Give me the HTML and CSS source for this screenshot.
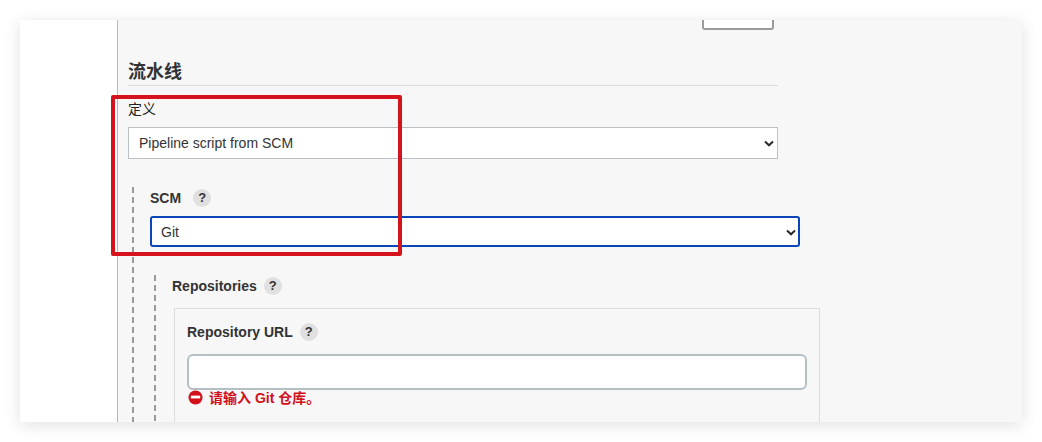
FILE: index.html
```html
<!DOCTYPE html>
<html lang="en">
<head>
    <meta charset="UTF-8" />
    <meta name="viewport" content="width=device-width, initial-scale=1.0" />
    <title>Pipeline</title>
    <link rel="stylesheet" href="styles.css">
</head>
<body>
    <div class="window">
        <aside class="sidebar"></aside>

        <main class="content">
            <div class="top-row"><div class="apply-btn"></div></div>

            <h2 class="section-title">流水线</h2>

            <div class="field-label first-label">定义</div>
            <div class="select-wrap definition">
                <select class="select">
                    <option>Pipeline script from SCM</option>
                </select>
                <svg class="chevron" viewBox="0 0 10 7"><path d="M1 1.5 5 5.3 9 1.5" /></svg>
            </div>

            <!-- SCM block -->
            <div class="nested scm-block">
                <div class="label-row">
                    <span class="label-bold">SCM</span>
                    <span class="help">?</span>
                </div>
                <div class="select-wrap scm-select">
                    <select class="select focused">
                        <option>Git</option>
                    </select>
                    <svg class="chevron" viewBox="0 0 10 7"><path d="M1 1.5 5 5.3 9 1.5" /></svg>
                </div>

                <!-- Repositories block -->
                <div class="nested repos-block">
                    <div class="label-row">
                        <span class="label-bold">Repositories</span>
                        <span class="help">?</span>
                    </div>
                    <div class="repo-card">
                        <div class="label-row">
                            <span class="label-bold">Repository URL</span>
                            <span class="help">?</span>
                        </div>
                        <input class="text-input" type="text">
                        <div class="error-msg">
                            <svg class="error-icon" viewBox="0 0 16 16">
                                <circle cx="8" cy="8" r="7.5" />
                                <rect x="3" y="6" width="10" height="3" />
                            </svg>
                            <span>请输入 Git 仓库。</span>
                        </div>
                    </div>
                </div>
            </div>
        </main>

        <!-- red annotation drawn over the form -->
        <div class="highlight"></div>
    </div>
</body>
</html>
```

FILE: styles.css
```css
/* Basic reset */
* {
    margin: 0;
    padding: 0;
    box-sizing: border-box;
}

body {
    width: 1042px;
    height: 442px;
    padding: 20px;
    overflow: hidden;
    background-color: #fff;
    color: #333;
    font-family: "Liberation Sans", "Noto Sans CJK SC", Arial, sans-serif;
    font-size: 14px;
}

/* Screenshot frame with soft shadow */
.window {
    position: relative;
    display: flex;
    width: 1002px;
    height: 402px;
    background-color: #f7f7f7;
    box-shadow: 0 3px 16px rgba(0, 0, 0, 0.12);
}

.sidebar {
    width: 98px;
    flex-shrink: 0;
    background-color: #fff;
    border-right: 1px solid #b9b9b9;
}

.content {
    flex: 1;
    height: 402px;
    overflow: hidden;
    padding-left: 10px;
}

/* Bottom edge of the button cut off by the top of the frame */
.top-row {
    width: 650px;
    height: 10px;
    display: flex;
    justify-content: flex-end;
    padding-right: 4px;
}

.apply-btn {
    width: 72px;
    height: 10px;
    background-color: #fff;
    border: 2px solid #9a9a9a;
    border-top: none;
    border-radius: 0 0 3px 3px;
}

.section-title {
    width: 650px;
    height: 56px;
    padding-top: 31px;
    font-size: 18px;
    line-height: 22px;
    font-weight: bold;
    color: #333;
    border-bottom: 1px solid #dcdcdc;
}

.field-label {
    font-size: 14px;
    line-height: 16px;
    color: #222;
}

.first-label {
    margin-top: 15px;
    margin-bottom: 10px;
}

/* Selects */
.select-wrap {
    position: relative;
    width: 650px;
}

.select {
    display: block;
    width: 100%;
    appearance: none;
    background-color: #fff;
    color: #333;
    font-family: inherit;
    font-size: 14px;
    outline: none;
    border-radius: 0;
}

.definition .select {
    height: 32px;
    padding-left: 10px;
    border: 1px solid #b8c0c6;
}

.focused {
    height: 31px;
    padding-left: 9px;
    border: 2px solid #0a46b8;
    border-radius: 3px;
}

.chevron {
    position: absolute;
    top: 50%;
    right: 4px;
    width: 10px;
    height: 7px;
    margin-top: -3px;
    fill: none;
    stroke: #2b2b2b;
    stroke-width: 2;
}

/* Nested sections with the dashed line on the left */
.nested {
    background-image: repeating-linear-gradient(to bottom, #9a9a9a 0, #9a9a9a 6px, transparent 6px, transparent 10px);
    background-size: 2px 100%;
    background-repeat: no-repeat;
}

.scm-block {
    margin-top: 28px;
    margin-left: 4px;
    padding-left: 18px;
    height: 300px;
}

.repos-block {
    margin-top: 28px;
    margin-left: 4px;
    padding-top: 2px;
    padding-left: 18px;
    height: 200px;
}

.label-row {
    display: flex;
    align-items: center;
    gap: 7px;
    height: 18px;
    margin-bottom: 13px;
}

.label-bold {
    font-size: 14px;
    font-weight: bold;
    color: #333;
}

.help {
    width: 18px;
    height: 18px;
    border-radius: 50%;
    background-color: #e0e0e0;
    color: #333;
    font-size: 13px;
    font-weight: bold;
    line-height: 18px;
    text-align: center;
}

.scm-block > .label-row {
    gap: 12px;
    padding-top: 2px;
    height: 20px;
    margin-bottom: 9px;
}

.repo-card {
    width: 646px;
    height: 200px;
    margin-left: 2px;
    padding: 14px 12px 0;
    border: 1px solid #dcdcdc;
}

.text-input {
    display: block;
    width: 620px;
    height: 36px;
    background-color: #fff;
    border: 2px solid #b4bfc4;
    border-radius: 6px;
    outline: none;
}

.error-msg {
    display: flex;
    align-items: center;
    gap: 6px;
    height: 16px;
    margin-top: -1px;
    font-size: 14px;
    font-weight: bold;
    color: #d2101c;
}

.error-icon {
    width: 15px;
    height: 15px;
    margin-left: 1px;
    flex-shrink: 0;
}

.error-icon circle {
    fill: #d2101c;
}

.error-icon rect {
    fill: #fff;
}

/* Red annotation box */
.highlight {
    position: absolute;
    left: 91px;
    top: 75px;
    width: 291px;
    height: 161px;
    border: 4px solid #d6121d;
    border-radius: 2px;
}
```
